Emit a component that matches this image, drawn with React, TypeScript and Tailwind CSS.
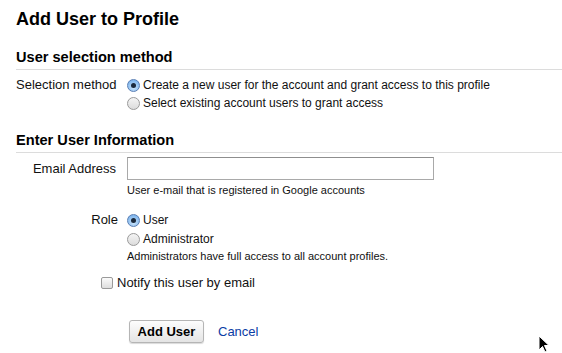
import React from 'react';

const Radio: React.FC<{ checked?: boolean }> = ({ checked }) =>
  checked ? (
    <span className="flex h-[13px] w-[13px] shrink-0 items-center justify-center rounded-full border border-[#5a7fb5] bg-[radial-gradient(circle_at_50%_70%,#c9e4fb,#6aa8e8)]">
      <span className="h-[5px] w-[5px] rounded-full bg-[#1b2a3d]" />
    </span>
  ) : (
    <span className="h-[13px] w-[13px] shrink-0 rounded-full border border-[#9a9a9a] bg-gradient-to-b from-[#f4f4f4] to-[#dcdcdc]" />
  );

const SectionTitle: React.FC<{ children: React.ReactNode }> = ({ children }) => (
  <div className="ml-4 border-b border-[#dcdcdc] pb-[3px] text-[14.6px] font-bold leading-[18px] text-black">
    {children}
  </div>
);

export default function App() {
  return (
    <div className="relative h-[353px] w-[562px] overflow-hidden bg-white font-['Liberation_Sans',Arial,sans-serif] text-[13px] text-[#111]">
      <h1 className="ml-4 pt-[8px] text-[18px] font-bold leading-[22px] text-black">Add User to Profile</h1>

      <div className="mt-[18px]">
        <SectionTitle>User selection method</SectionTitle>
        <div className="mt-[6px] flex">
          <div className="w-[118px] shrink-0 pl-4 leading-[18px]">Selection method</div>
          <div className="ml-[9px] flex flex-col">
            <label className="flex h-[18px] items-center gap-[3px]">
              <Radio checked />
              <span className="text-[12px]">Create a new user for the account and grant access to this profile</span>
            </label>
            <label className="flex h-[18px] items-center gap-[3px]">
              <Radio />
              <span className="text-[12px]">Select existing account users to grant access</span>
            </label>
          </div>
        </div>
      </div>

      <div className="mt-[19px]">
        <SectionTitle>Enter User Information</SectionTitle>
        <div className="mt-[4px] flex">
          <div className="w-[118px] shrink-0 pt-[3px] pr-[2px] text-right leading-[18px]">Email Address</div>
          <div className="ml-[9px] flex flex-col">
            <div className="h-[23px] w-[307px] border border-[#a9a9a9] border-t-[#8e8e8e] bg-white" />
            <div className="mt-[3px] text-[11px] leading-[14px]">User e-mail that is registered in Google accounts</div>
          </div>
        </div>

        <div className="mt-[14px] flex">
          <div className="w-[118px] shrink-0 text-right leading-[18px]">Role</div>
          <div className="ml-[9px] flex flex-col">
            <label className="flex h-[18px] items-center gap-[3px]">
              <Radio checked />
              <span className="text-[12px]">User</span>
            </label>
            <label className="flex h-[20px] items-center gap-[3px]">
              <Radio />
              <span className="text-[12px]">Administrator</span>
            </label>
            <div className="text-[11px] leading-[14px]">Administrators have full access to all account profiles.</div>
          </div>
        </div>

        <label className="ml-[101px] mt-[11px] flex h-[18px] items-center gap-[4px]">
          <span className="h-[12px] w-[12px] rounded-[2px] border border-[#9a9a9a] bg-gradient-to-b from-[#fbfbfb] to-[#dedede]" />
          <span>Notify this user by email</span>
        </label>

        <div className="ml-[129px] mt-[28px] flex items-center gap-[14px]">
          <button className="h-[23px] w-[75px] rounded-[3px] border border-[#b5b5b5] bg-gradient-to-b from-[#fdfdfd] to-[#e4e4e4] text-[13px] font-bold text-black shadow-[0_1px_1px_rgba(0,0,0,0.15)]">
            Add User
          </button>
          <a className="text-[13px] text-[#0b3ca5]">Cancel</a>
        </div>
      </div>

      <svg className="absolute left-[538px] top-[335px]" width="13" height="18" viewBox="0 0 13 18">
        <path d="M1 1 L1 15 L4.5 11.5 L7 17 L9 16 L6.5 10.5 L11 10.5 Z" fill="#000" stroke="#fff" strokeWidth="1" />
      </svg>
    </div>
  );
}
